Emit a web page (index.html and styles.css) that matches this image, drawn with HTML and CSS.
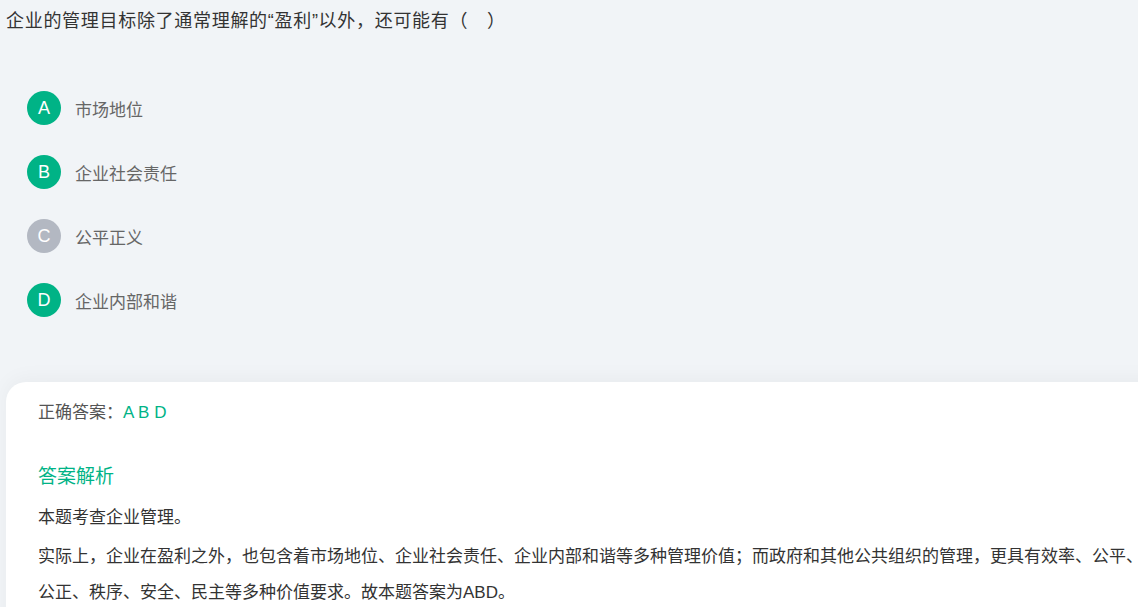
FILE: index.html
```html
<!DOCTYPE html>
<html lang="zh-CN">

<head>
    <meta charset="UTF-8">
    <meta name="viewport" content="width=device-width, initial-scale=1.0">
    <title>题目解析</title>
    <link rel="stylesheet" href="styles.css">
</head>

<body>
    <div class="page">
        <!--Question----------------------------------------------------------------------------->
        <div class="question">企业的管理目标除了通常理解的“盈利”以外，还可能有（　）</div>

        <!--Options------------------------------------------------------------------------------>
        <div class="options">
            <div class="option">
                <span class="letter on">A</span>
                <span class="label">市场地位</span>
            </div>
            <div class="option">
                <span class="letter on">B</span>
                <span class="label">企业社会责任</span>
            </div>
            <div class="option">
                <span class="letter">C</span>
                <span class="label">公平正义</span>
            </div>
            <div class="option">
                <span class="letter on">D</span>
                <span class="label">企业内部和谐</span>
            </div>
        </div>

        <!--Answer card-------------------------------------------------------------------------->
        <div class="card">
            <div class="answer">正确答案：<span class="green">A B D</span></div>
            <div class="analysis-title">答案解析</div>
            <p class="first">本题考查企业管理。</p>
            <p>实际上，企业在盈利之外，也包含着市场地位、企业社会责任、企业内部和谐等多种管理价值；而政府和其他公共组织的管理，更具有效率、公平、公正、秩序、安全、民主等多种价值要求。故本题答案为ABD。</p>
        </div>
    </div>
</body>

</html>
```

FILE: styles.css
```css
html, body {
    margin: 0;
    height: 100%;
    overflow: hidden;
}

body {
    background-color: #f1f4f7;
    color: #333;
    font-family: "Liberation Sans", "Noto Sans CJK SC", sans-serif;
}

.page {
    width: 100%;
    overflow: hidden;
}

.question {
    font-size: 18px;
    line-height: 24px;
    letter-spacing: 0.7px;
    padding: 9px 6px 0;
    color: #333;
}

.options {
    display: flex;
    flex-direction: column;
    gap: 30px;
    margin-top: 58px;
    padding-left: 27px;
}

.option {
    display: flex;
    align-items: center;
    height: 34px;
}

.letter {
    width: 34px;
    height: 34px;
    border-radius: 50%;
    background-color: #b3b8c2;
    color: white;
    font-size: 18px;
    display: flex;
    align-items: center;
    justify-content: center;
    flex-shrink: 0;
}

.letter.on {
    background-color: #00b386;
}

.label {
    margin-left: 14px;
    font-size: 17px;
    color: #666;
}

.card {
    margin: 65px 0 0 6px;
    width: 1110px;
    padding: 20px 32px 40px;
    background-color: white;
    border-radius: 20px 0 0 0;
    box-shadow: 0 -4px 20px rgba(0, 0, 0, 0.04);
}

.answer {
    font-size: 17px;
    line-height: 22px;
    color: #555;
}

.green {
    color: #00b386;
}

.analysis-title {
    margin-top: 41px;
    font-size: 19px;
    line-height: 24px;
    color: #00b386;
}

.card p {
    margin: 3px 0 0;
    font-size: 17px;
    line-height: 36px;
    color: #333;
}

.card p.first {
    margin-top: 11px;
}
```
